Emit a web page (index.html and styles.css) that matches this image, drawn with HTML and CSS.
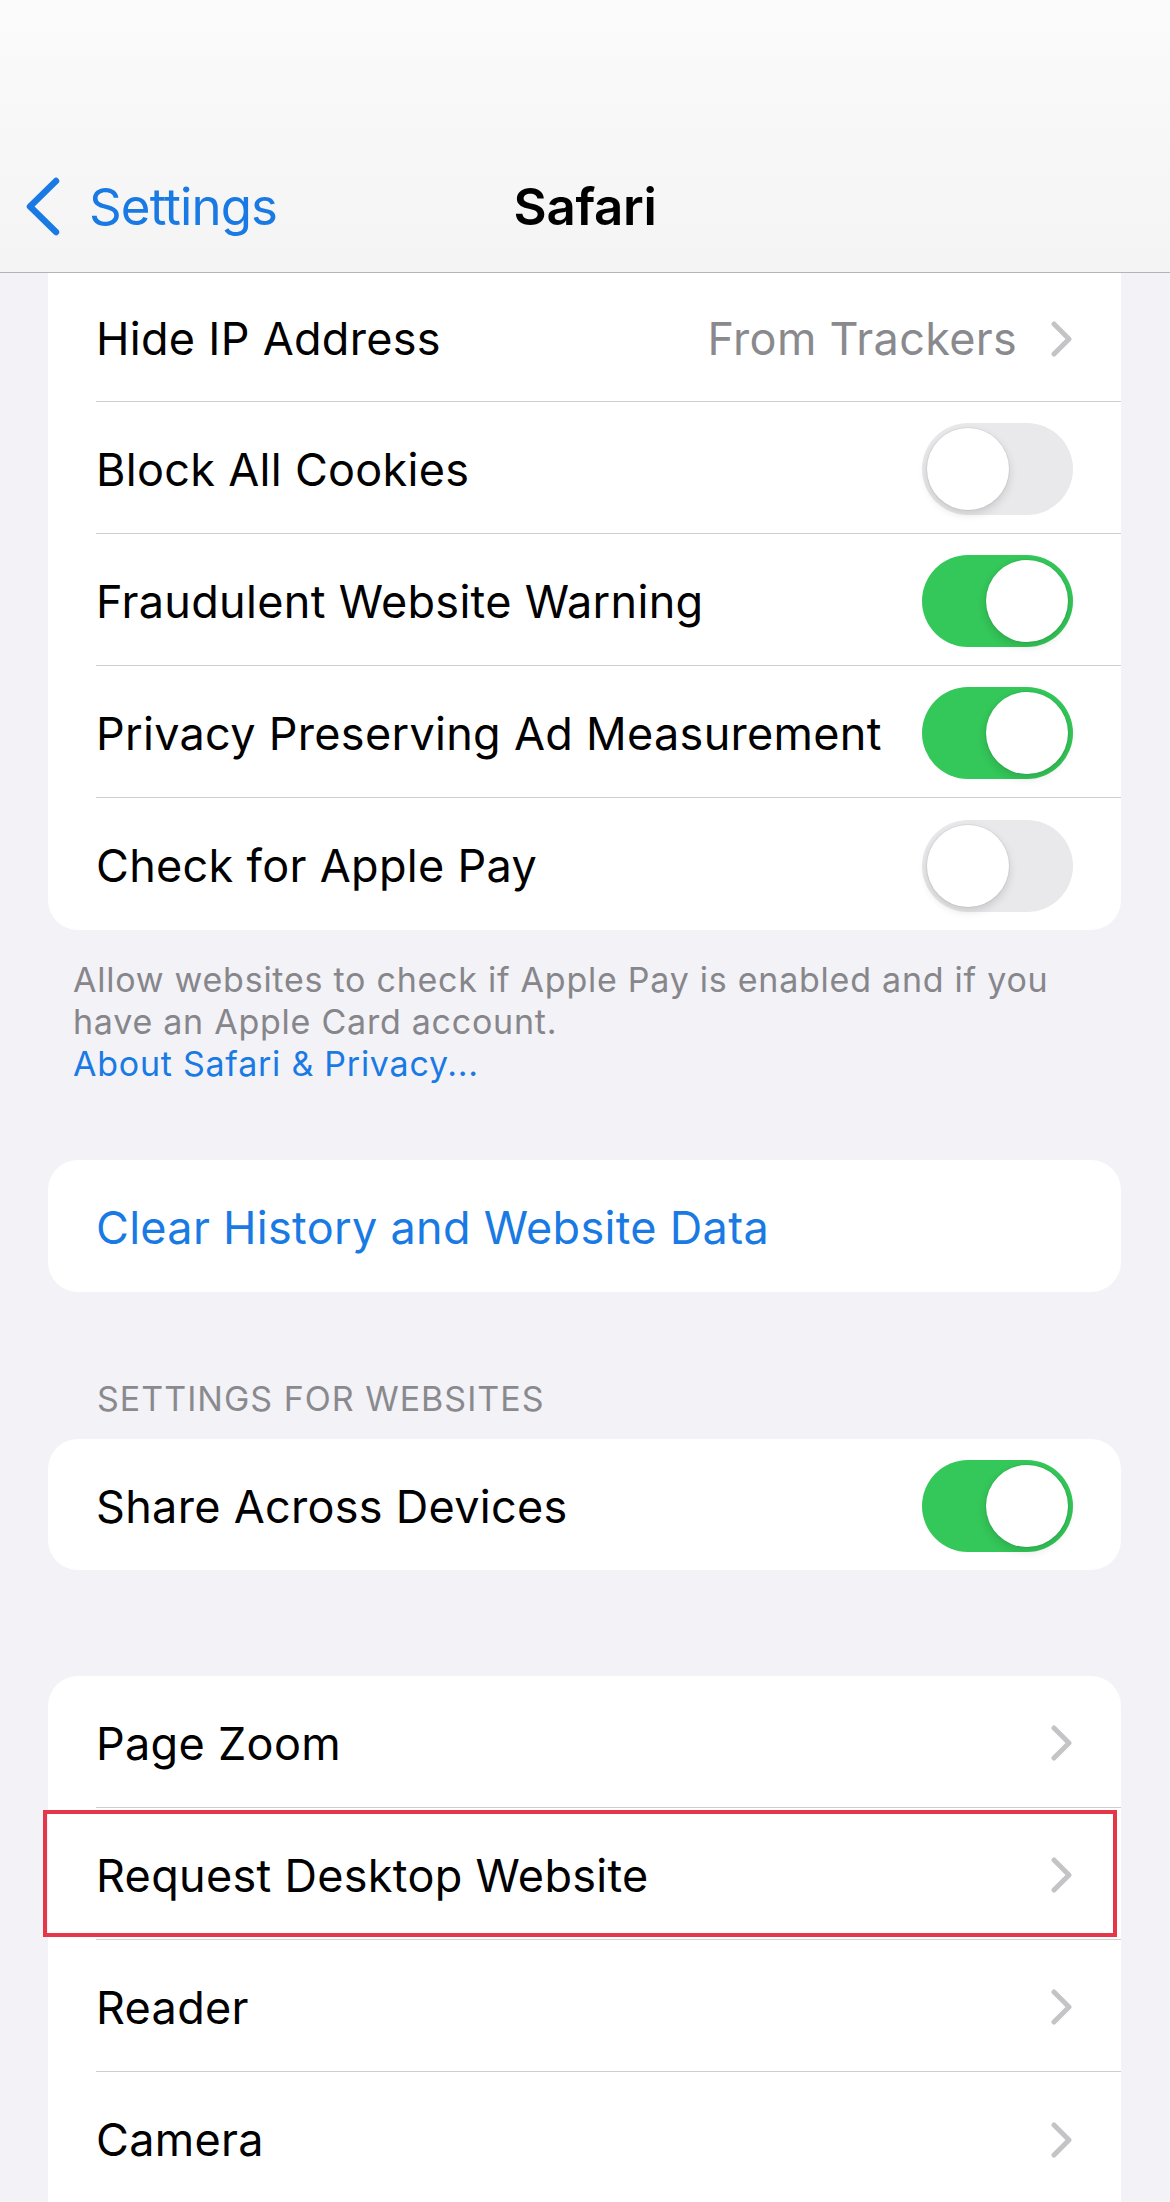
FILE: index.html
```html
<!DOCTYPE html>
<html lang="en">

<head>
    <meta charset="UTF-8">
    <title>Safari</title>
    <link rel="stylesheet" href="styles.css">
</head>

<body>
    <div class="screen">
        <header class="navbar">
            <a class="back" href="#">
                <svg class="back-icon" viewBox="0 0 36 60" width="36" height="60">
                    <path d="M30 4 L4 29.5 L30 55" fill="none" stroke="#1a7ae4" stroke-width="6.5" stroke-linecap="round" stroke-linejoin="round" />
                </svg>
                <span>Settings</span>
            </a>
            <h1 class="title">Safari</h1>
        </header>

        <section class="group clipped">
            <div class="row first">
                <div class="row-body">
                    <span class="label">Hide IP Address</span>
                    <span class="value">From Trackers</span>
                    <svg class="chev" viewBox="0 0 22 36" width="22" height="36"><path d="M3 3 L18 18 L3 33" /></svg>
                </div>
            </div>
            <div class="row">
                <div class="row-body">
                    <span class="label">Block All Cookies</span>
                    <span class="switch"></span>
                </div>
            </div>
            <div class="row">
                <div class="row-body">
                    <span class="label">Fraudulent Website Warning</span>
                    <span class="switch on"></span>
                </div>
            </div>
            <div class="row">
                <div class="row-body">
                    <span class="label">Privacy Preserving Ad Measurement</span>
                    <span class="switch on"></span>
                </div>
            </div>
            <div class="row">
                <div class="row-body">
                    <span class="label">Check for Apple Pay</span>
                    <span class="switch"></span>
                </div>
            </div>
        </section>
        <p class="note">
            Allow websites to check if Apple Pay is enabled and if you<br>
            have an Apple Card account.<br>
            <a href="#">About Safari &amp; Privacy...</a>
        </p>

        <section class="group clear">
            <div class="row">
                <div class="row-body">
                    <span class="label link">Clear History and Website Data</span>
                </div>
            </div>
        </section>

        <h2 class="group-title">SETTINGS FOR WEBSITES</h2>
        <section class="group share">
            <div class="row single">
                <div class="row-body">
                    <span class="label">Share Across Devices</span>
                    <span class="switch on"></span>
                </div>
            </div>
        </section>

        <section class="group sites">
            <div class="row">
                <div class="row-body">
                    <span class="label">Page Zoom</span>
                    <svg class="chev" viewBox="0 0 22 36" width="22" height="36"><path d="M3 3 L18 18 L3 33" /></svg>
                </div>
            </div>
            <div class="row">
                <div class="row-body">
                    <span class="label">Request Desktop Website</span>
                    <svg class="chev" viewBox="0 0 22 36" width="22" height="36"><path d="M3 3 L18 18 L3 33" /></svg>
                </div>
                <span class="highlight"></span>
            </div>
            <div class="row">
                <div class="row-body">
                    <span class="label">Reader</span>
                    <svg class="chev" viewBox="0 0 22 36" width="22" height="36"><path d="M3 3 L18 18 L3 33" /></svg>
                </div>
            </div>
            <div class="row">
                <div class="row-body">
                    <span class="label">Camera</span>
                    <svg class="chev" viewBox="0 0 22 36" width="22" height="36"><path d="M3 3 L18 18 L3 33" /></svg>
                </div>
            </div>
        </section>
    </div>
</body>

</html>
```

FILE: styles.css
```css
* {
    margin: 0;
    padding: 0;
    box-sizing: border-box;
}

html,
body {
    height: 2202px;
    overflow: hidden;
}

body {
    background-color: #f2f2f7;
    font-family: "Inter", "Liberation Sans", sans-serif;
    color: #000;
}

a {
    color: #1a7ae4;
    text-decoration: none;
}

/* 顶部导航 */
.navbar {
    display: grid;
    grid-template-columns: 1fr auto 1fr;
    align-items: center;
    height: 273px;
    padding-top: 177px;
    padding-bottom: 35px;
    background: linear-gradient(#fbfbfb, #f4f4f5);
    border-bottom: 1px solid #b4b4b6;
}

.back {
    display: flex;
    align-items: center;
    padding-left: 26px;
    font-size: 51px;
    letter-spacing: -0.9px;
    line-height: 60px;
}

.back-icon {
    margin-right: 27px;
}

.title {
    font-size: 51px;
    font-weight: 600;
    line-height: 60px;
    letter-spacing: -0.3px;
}

/* 分组卡片 */
.group {
    margin: 0 49px 0 48px;
    background-color: #fff;
    border-radius: 30px;
    overflow: hidden;
}

.group.clipped {
    border-radius: 0 0 30px 30px;
}

.row {
    position: relative;
    height: 132px;
    padding-left: 48px;
}

.row.first {
    height: 129px;
}

.row.single {
    height: 131px;
}

.row-body {
    display: flex;
    align-items: center;
    height: 100%;
    padding-top: 3px;
    padding-right: 48px;
    border-bottom: 1px solid #cfcfd2;
}

.row:last-child .row-body {
    border-bottom: none;
}

.label {
    flex: 1;
    font-size: 45px;
    letter-spacing: 0.3px;
    white-space: nowrap;
}

.label.link {
    color: #1a7ae4;
}

.value {
    font-size: 45px;
    letter-spacing: 0.3px;
    color: #8a8a8e;
    margin-right: 34px;
}

.chev {
    flex: none;
}

.chev path {
    fill: none;
    stroke: #c4c4c7;
    stroke-width: 5;
    stroke-linecap: round;
    stroke-linejoin: round;
}

/* 开关 */
.switch {
    flex: none;
    position: relative;
    width: 151px;
    height: 92px;
    border-radius: 46px;
    background-color: #e9e9eb;
}

.switch::after {
    content: "";
    position: absolute;
    top: 5px;
    left: 5px;
    width: 82px;
    height: 82px;
    border-radius: 50%;
    background-color: #fff;
    box-shadow: 0 4px 10px rgba(0, 0, 0, 0.14), 0 0 0 1px rgba(0, 0, 0, 0.05);
}

.switch.on {
    background-color: #34c759;
}

.switch.on::after {
    left: auto;
    right: 5px;
}

/* 说明文字 */
.note {
    padding: 29px 40px 0 73px;
    font-size: 34px;
    line-height: 42px;
    color: #86868b;
    letter-spacing: 0.75px;
    white-space: nowrap;
}

.group.clear {
    margin-top: 75px;
}

.group-title {
    margin: 87px 0 20px 97px;
    font-size: 34px;
    font-weight: 400;
    line-height: 40px;
    letter-spacing: 1px;
    color: #8a8a8e;
}

/* 下面的卡片延伸到屏幕外 */
.group.sites {
    margin-top: 106px;
    border-radius: 30px 30px 0 0;
    overflow: visible;
}

/* 红色标记框 */
.highlight {
    position: absolute;
    top: 2px;
    bottom: 3px;
    left: -5px;
    right: 4px;
    border: 4px solid #e5364a;
}
```
